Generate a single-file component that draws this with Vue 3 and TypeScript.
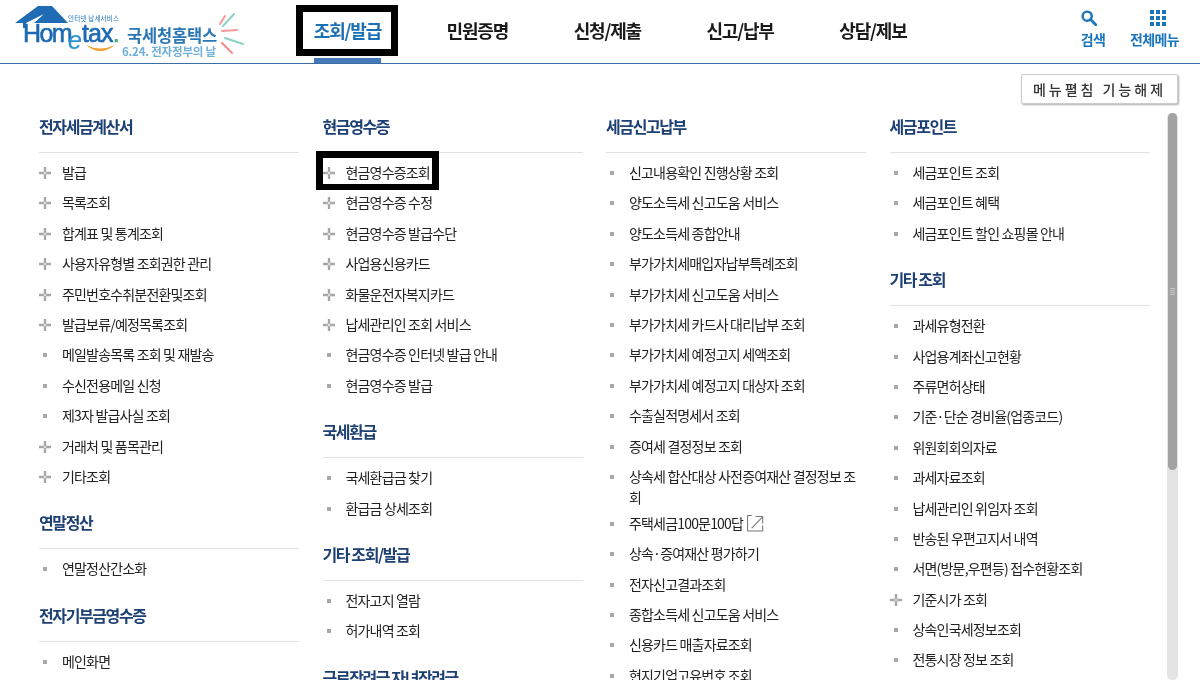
<script setup lang="ts">
interface MenuItem {
  label: string
  plus?: boolean
  ext?: boolean
}
interface MenuGroup {
  title: string
  items: MenuItem[]
}

const nav = ['조회/발급', '민원증명', '신청/제출', '신고/납부', '상담/제보']

const p = (label: string): MenuItem => ({ label, plus: true })
const s = (label: string): MenuItem => ({ label })

const columns: MenuGroup[][] = [
  [
    {
      title: '전자세금계산서',
      items: [
        p('발급'), p('목록조회'), p('합계표 및 통계조회'), p('사용자유형별 조회권한 관리'),
        p('주민번호수취분전환및조회'), p('발급보류/예정목록조회'), s('메일발송목록 조회 및 재발송'),
        s('수신전용메일 신청'), s('제3자 발급사실 조회'), p('거래처 및 품목관리'), p('기타조회'),
      ],
    },
    { title: '연말정산', items: [s('연말정산간소화')] },
    { title: '전자기부금영수증', items: [s('메인화면')] },
  ],
  [
    {
      title: '현금영수증',
      items: [
        p('현금영수증조회'), p('현금영수증 수정'), p('현금영수증 발급수단'), p('사업용신용카드'),
        p('화물운전자복지카드'), p('납세관리인 조회 서비스'), s('현금영수증 인터넷 발급 안내'), s('현금영수증 발급'),
      ],
    },
    { title: '국세환급', items: [s('국세환급금 찾기'), s('환급금 상세조회')] },
    { title: '기타 조회/발급', items: [s('전자고지 열람'), s('허가내역 조회')] },
    { title: '근로장려금 자녀장려금', items: [] },
  ],
  [
    {
      title: '세금신고납부',
      items: [
        s('신고내용확인 진행상황 조회'), s('양도소득세 신고도움 서비스'), s('양도소득세 종합안내'),
        s('부가가치세매입자납부특례조회'), s('부가가치세 신고도움 서비스'), s('부가가치세 카드사 대리납부 조회'),
        s('부가가치세 예정고지 세액조회'), s('부가가치세 예정고지 대상자 조회'), s('수출실적명세서 조회'),
        s('증여세 결정정보 조회'), s('상속세 합산대상 사전증여재산 결정정보 조회'),
        { label: '주택세금100문100답', ext: true }, s('상속·증여재산 평가하기'), s('전자신고결과조회'),
        s('종합소득세 신고도움 서비스'), s('신용카드 매출자료조회'), s('현지기업고유번호 조회'),
      ],
    },
  ],
  [
    { title: '세금포인트', items: [s('세금포인트 조회'), s('세금포인트 혜택'), s('세금포인트 할인 쇼핑몰 안내')] },
    {
      title: '기타 조회',
      items: [
        s('과세유형전환'), s('사업용계좌신고현황'), s('주류면허상태'), s('기준·단순 경비율(업종코드)'),
        s('위원회회의자료'), s('과세자료조회'), s('납세관리인 위임자 조회'), s('반송된 우편고지서 내역'),
        s('서면(방문,우편등) 접수현황조회'), p('기준시가 조회'), s('상속인국세정보조회'), s('전통시장 정보 조회'),
      ],
    },
  ],
]
</script>

<template>
  <div class="page">
    <header class="top">
      <div class="logo">
        <svg width="250" height="62" viewBox="0 0 250 62">
          <path d="M15 23 L38 6 H52 L68 23 H34 L44 14 L26 23 V28 H23 V23 Z" fill="#1f6cb4" />
          <path d="M86 45 Q100 57 115 45 Q100 52 86 45 Z" fill="#f0a030" />
          <g stroke-width="2" stroke-linecap="round">
            <path d="M220 24 L225 16" stroke="#f29a9a" />
            <path d="M223 26 L234 14" stroke="#8ad4c6" />
            <path d="M222 31 L237 30" stroke="#f29a9a" />
            <path d="M225 38 L243 44" stroke="#8ad4c6" />
            <path d="M222 43 L232 53" stroke="#f08a8a" />
          </g>
        </svg>
        <span class="logo-small">인터넷 납세서비스</span>
        <span class="logo-home">Hom</span>
        <span class="logo-e">e</span>
        <span class="logo-tax">tax<i>.</i></span>
        <span class="logo-name">국세청홈택스</span>
        <span class="logo-date">6.24. 전자정부의 날</span>
      </div>
      <nav class="nav">
        <a v-for="(n, i) in nav" :key="n" class="nav-item" :class="{ on: i === 0 }">{{ n }}</a>
      </nav>
      <div class="tools">
        <a class="tool">
          <svg class="ic-search" width="16" height="16" viewBox="0 0 16 16">
            <circle cx="6.2" cy="6.2" r="4.6" fill="none" stroke="#1a75bb" stroke-width="2.4" />
            <path d="M9.8 9.8 L14.8 14.8" stroke="#1a75bb" stroke-width="2.8" stroke-linecap="round" />
          </svg>
          <span>검색</span>
        </a>
        <a class="tool">
          <svg class="ic-all" width="16" height="16" viewBox="0 0 16 16" fill="#1a75bb">
            <template v-for="y in [0, 6, 12]" :key="y">
              <rect v-for="x in [0, 6, 12]" :key="x" :x="x" :y="y" width="4" height="4" />
            </template>
          </svg>
          <span>전체메뉴</span>
        </a>
      </div>
    </header>

    <div class="body">
      <div class="toolbar">
        <button class="unfold" type="button">메뉴펼침 기능해제</button>
      </div>
      <div class="scroll">
        <div class="cols">
          <div v-for="(col, ci) in columns" :key="ci" class="col">
            <section v-for="g in col" :key="g.title" class="group">
              <h3>{{ g.title }}</h3>
              <ul v-if="g.items.length">
                <li v-for="it in g.items" :key="it.label" :class="{ mark: it.label === '현금영수증조회' }">
                  <svg v-if="it.plus" class="ico" width="12" height="12" viewBox="0 0 12 12">
                    <path d="M6 0V12M0 6H12" stroke="#a6a6a6" stroke-width="2.4" />
                    <rect x="4.8" y="4.8" width="2.4" height="2.4" fill="#dcdcdc" />
                  </svg>
                  <i v-else class="dot"></i>
                  <span>{{ it.label }}</span>
                  <svg v-if="it.ext" class="ext" width="17" height="17" viewBox="0 0 18 18" fill="none" stroke="#777" stroke-width="1.1">
                    <path d="M5 .6H.6V17H16.6V11" />
                    <path d="M5 14L16 2.5M9 1.5H16.6V9" />
                  </svg>
                </li>
              </ul>
            </section>
          </div>
        </div>
        <div class="track"><div class="thumb"><b></b></div></div>
      </div>
    </div>
  </div>
</template>

<style>
html, body {
  margin: 0;
  background: #fff;
}
</style>

<style scoped>
.page {
  width: 1200px;
  height: 687px;
  overflow: hidden;
  font-family: "Noto Sans CJK KR", "Noto Sans", sans-serif;
  color: #222;
  filter: blur(0.3px);
}
.top {
  height: 63px;
  border-bottom: 1px solid #3a6ea5;
  display: flex;
  position: relative;
}
.logo {
  width: 281px;
  flex: none;
  position: relative;
  filter: blur(0.3px);
}
.logo svg {
  position: absolute;
  left: 0;
  top: 0;
}
.logo span {
  position: absolute;
  white-space: nowrap;
}
.logo-small {
  left: 68px;
  top: 14px;
  font-size: 6.5px;
  line-height: 9px;
  letter-spacing: 0.2px;
  color: #2273b9;
}
.logo-home, .logo-tax, .logo-e {
  font-family: "Liberation Sans", sans-serif;
  font-size: 25px;
  line-height: 24px;
  color: #1d6ab3;
  -webkit-text-stroke: 0.6px #1d6ab3;
}
.logo-home {
  left: 23px;
  top: 21px;
  letter-spacing: -1.6px;
}
.logo-tax {
  left: 82px;
  top: 21px;
  letter-spacing: -0.9px;
}
.logo-tax i {
  font-style: normal;
  color: #3bb273;
  -webkit-text-stroke: 0.6px #3bb273;
}
.logo-e {
  left: 68px;
  top: 28px;
  font-size: 25px;
  font-style: italic;
  color: #2f95d2;
  -webkit-text-stroke: 0.2px #2f95d2;
}
.logo-name {
  left: 127px;
  top: 24px;
  font-size: 16.5px;
  line-height: 22px;
  font-weight: 700;
  letter-spacing: -0.2px;
  color: #2a77b5;
}
.logo-date {
  left: 122px;
  top: 44px;
  font-size: 11.5px;
  line-height: 14px;
  font-weight: 700;
  letter-spacing: -0.2px;
  color: #6eb0d8;
}
.nav {
  display: flex;
}
.nav-item {
  height: 63px;
  padding: 0 32.8px 4px;
  display: flex;
  align-items: center;
  box-sizing: border-box;
  font-size: 18px;
  font-weight: 700;
  letter-spacing: -1.2px;
  color: #1a1a1a;
  position: relative;
}
.nav-item.on {
  color: #1a6fb5;
}
.nav-item.on::before {
  content: "";
  position: absolute;
  left: 15px;
  top: 5px;
  width: 88px;
  height: 37px;
  border: 7px solid #000;
}
.nav-item.on::after {
  content: "";
  position: absolute;
  left: 33px;
  bottom: 0;
  width: 67px;
  height: 5px;
  background: #4579b8;
}
.tools {
  margin-left: auto;
  display: flex;
  padding-right: 21px;
  gap: 24.5px;
}
.tool {
  display: flex;
  flex-direction: column;
  padding-top: 10px;
  font-size: 14px;
  font-weight: 700;
  letter-spacing: -0.6px;
  color: #1a75bb;
  line-height: 20px;
}
.tool svg {
  margin-bottom: 3px;
}
.ic-all {
  margin-left: 20px;
}
.toolbar {
  height: 49px;
  display: flex;
  justify-content: flex-end;
  align-items: flex-start;
  padding: 10px 22px 0 0;
  box-sizing: border-box;
}
.unfold {
  width: 157px;
  height: 30px;
  padding: 0;
  background: #fff;
  border: 1px solid #ccc;
  box-shadow: 1px 1px 2px #aaa;
  border-radius: 2px;
  font-family: inherit;
  font-size: 14px;
  font-weight: 500;
  letter-spacing: 3px;
  color: #333;
}
.scroll {
  height: 567px;
  display: flex;
  overflow: hidden;
}
.cols {
  flex: 1;
  display: flex;
  gap: 23.5px;
  padding-left: 39px;
  height: 567px;
  overflow: hidden;
}
.col {
  width: 260px;
  flex: none;
}
.group h3 {
  margin: 0;
  height: 39px;
  line-height: 26px;
  border-bottom: 1px solid #e2e2e2;
  font-size: 16px;
  font-weight: 700;
  letter-spacing: -1.4px;
  color: #1c3f74;
}
.group ul {
  margin: 0;
  padding: 4px 0 18px;
  list-style: none;
}
.group li {
  display: flex;
  align-items: flex-start;
  min-height: 30.4px;
  box-sizing: border-box;
  padding: 5px 0 0;
  font-size: 14px;
  line-height: 21px;
  letter-spacing: -0.82px;
  position: relative;
}
.ico {
  flex: none;
  margin: 5px 11px 0 0;
  position: relative;
}
.dot {
  flex: none;
  width: 4px;
  height: 4px;
  margin: 9px 15px 0 4px;
  background: #a8a8a8;
}
.ext {
  flex: none;
  margin: 2px 0 0 4px;
}
.mark::before {
  content: "";
  position: absolute;
  left: -7px;
  top: -6px;
  width: 109px;
  height: 26px;
  border-style: solid;
  border-color: #000;
  border-width: 7px 7px 6px;
}
.track {
  flex: none;
  width: 11px;
  margin-right: 22px;
  height: 567px;
  border-radius: 5px;
  background: #e4e4e4;
}
.thumb {
  height: 357px;
  margin: 0 1px;
  border-radius: 5px;
  background: #a3a3a3;
  display: flex;
  align-items: center;
  justify-content: center;
}
.thumb b {
  width: 5px;
  height: 7px;
  background: repeating-linear-gradient(#c6c6c6 0 1px, transparent 1px 2px);
}
</style>
